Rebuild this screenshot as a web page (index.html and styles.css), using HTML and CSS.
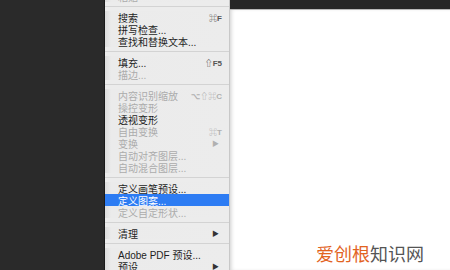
FILE: index.html
```html
<!DOCTYPE html>
<html lang="zh-CN">
<head>
  <meta charset="UTF-8" />
  <title>编辑菜单</title>
  <link rel="stylesheet" href="styles.css">
</head>
<body>
  <div class="side"></div>

  <ul class="menu">
    <li class="item off"><span>粘贴</span></li>
    <li class="sep"></li>
    <li class="item"><span>搜索</span><span class="key">⌘F</span></li>
    <li class="item"><span>拼写检查...</span></li>
    <li class="item"><span>查找和替换文本...</span></li>
    <li class="sep"></li>
    <li class="item"><span>填充...</span><span class="key">⇧F5</span></li>
    <li class="item off"><span>描边...</span></li>
    <li class="sep"></li>
    <li class="item off"><span>内容识别缩放</span><span class="key">⌥⇧⌘C</span></li>
    <li class="item off"><span>操控变形</span></li>
    <li class="item"><span>透视变形</span></li>
    <li class="item off"><span>自由变换</span><span class="key">⌘T</span></li>
    <li class="item off"><span>变换</span><span class="arrow">▶</span></li>
    <li class="item off"><span>自动对齐图层...</span></li>
    <li class="item off"><span>自动混合图层...</span></li>
    <li class="sep"></li>
    <li class="item"><span>定义画笔预设...</span></li>
    <li class="item active"><span>定义图案...</span></li>
    <li class="item off"><span>定义自定形状...</span></li>
    <li class="sep"></li>
    <li class="item"><span>清理</span><span class="arrow">▶</span></li>
    <li class="sep"></li>
    <li class="item"><span>Adobe PDF 预设...</span></li>
    <li class="item"><span>预设</span><span class="arrow">▶</span></li>
  </ul>

  <div class="canvas">
    <div class="topbar"></div>
    <div class="paper">
      <div class="mark"><span class="orange">爱创根</span>知识网</div>
    </div>
  </div>
</body>
</html>
```

FILE: styles.css
```css
html, body {
  margin: 0;
  height: 100%;
}

body {
  display: flex;
  overflow: hidden;
  background-color: #2a2a2a;
  font-family: "Liberation Sans", "Noto Sans CJK SC", sans-serif;
}

.side {
  width: 104px;
  flex-shrink: 0;
  background-color: #2a2a2a;
}

.menu {
  width: 124px;
  flex-shrink: 0;
  list-style: none;
  margin: -10px 0 0 0;
  padding: 0;
  background: linear-gradient(to right, #dcdcdc 0, #ebebeb 6px, #ececec 100%);
  border-left: 1px solid #1a1a1a;
  border-right: 1px solid #c8c8c8;
}

.item {
  display: flex;
  align-items: center;
  justify-content: space-between;
  height: 12px;
  padding: 0 7px 0 13px;
  font-size: 10px;
  color: #1e1e1e;
  white-space: nowrap;
}

.item.off {
  color: #ababab;
}

.item.active {
  background-color: #2d7cf3;
  color: #fff;
}

.key {
  font-size: 8px;
  font-weight: bold;
  color: #555;
}

.off .key {
  color: #b0b0b0;
}

.arrow {
  font-size: 7px;
  color: #333;
  margin-right: 3px;
}

.off .arrow {
  color: #b0b0b0;
}

.sep {
  height: 9px;
  background: linear-gradient(#ececec 4px, #d3d3d3 4px, #d3d3d3 5px, #ececec 5px);
}

.canvas {
  flex: 1;
  display: flex;
  flex-direction: column;
  box-shadow: inset 3px 0 4px -2px rgba(0, 0, 0, 0.25);
}

.topbar {
  height: 9px;
  background-color: #262626;
  border-bottom: 1px solid #b8b8b8;
}

.paper {
  flex: 1;
  background-color: #fff;
  display: flex;
  align-items: flex-end;
  justify-content: flex-end;
  padding: 0 26px 7px 0;
  box-shadow: inset 3px 0 4px -2px rgba(0, 0, 0, 0.2);
}

.mark {
  font-size: 18px;
  color: #555;
  font-family: "Noto Sans CJK SC", sans-serif;
  line-height: 20px;
}

.orange {
  color: #e2631f;
}
```
